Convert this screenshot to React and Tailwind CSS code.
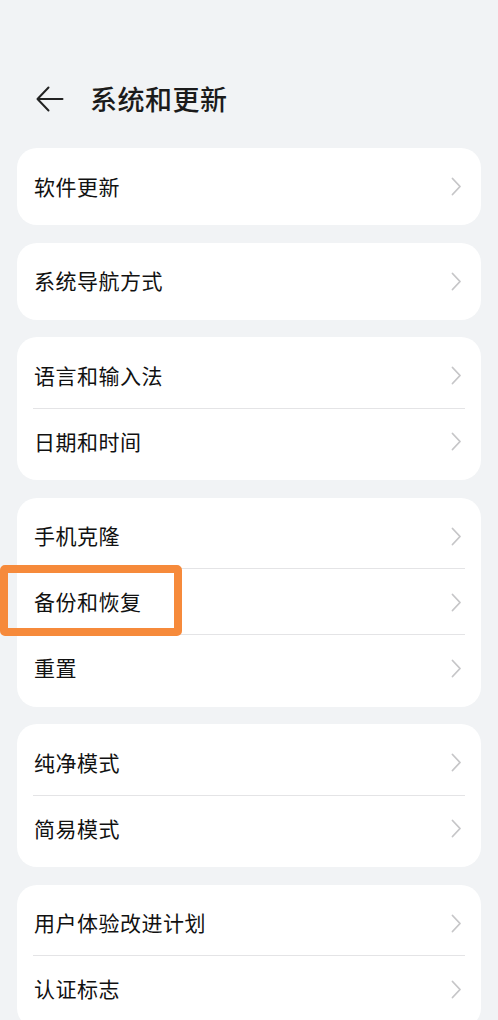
const groups = [
  ["软件更新"],
  ["系统导航方式"],
  ["语言和输入法", "日期和时间"],
  ["手机克隆", "备份和恢复", "重置"],
  ["纯净模式", "简易模式"],
  ["用户体验改进计划", "认证标志"],
];

const highlighted = "备份和恢复";

function Chevron() {
  return (
    <svg width="11" height="19" viewBox="0 0 11 19" fill="none" className="shrink-0">
      <path d="M1.5 1.5 L9 9.5 L1.5 17.5" stroke="#c6c6c8" strokeWidth="1.8" strokeLinecap="round" strokeLinejoin="round" />
    </svg>
  );
}

function Row({ label, last }) {
  return (
    <div className="relative h-[66px] flex items-center pl-[17px] pr-[19px]">
      <span className="flex-1 text-[21px] text-[#111111] tracking-[0.5px]">{label}</span>
      <Chevron />
      {!last && <div className="absolute left-[16px] right-[16px] bottom-0 h-px bg-[#e4e4e6]" />}
      {label === highlighted && (
        <div className="absolute left-[-17px] top-[-4px] w-[182px] h-[71px] border-[8px] border-[#f68a3b] rounded-[5px] pointer-events-none" />
      )}
    </div>
  );
}

export default function App() {
  return (
    <div
      className="min-h-[1020px] h-[1020px] overflow-hidden bg-[#f1f3f5] pt-[71px]"
      style={{ fontFamily: '"Noto Sans CJK SC", "Noto Sans", sans-serif' }}
    >
      <div className="h-[56px] flex items-center pl-[36px] mb-[21px]">
        <svg width="28" height="26" viewBox="0 0 28 26" fill="none">
          <path d="M26.5 13 H2 M12.5 1.5 L1.5 13 L12.5 24.5" stroke="#222" strokeWidth="2" strokeLinecap="round" strokeLinejoin="round" />
        </svg>
        <h1 className="ml-[26px] text-[27px] font-medium text-[#1b1b1b] tracking-[0.5px]">系统和更新</h1>
      </div>

      <div className="flex flex-col gap-[17.5px] px-[17px]">
        {groups.map((items, gi) => (
          <div key={gi} className="bg-white rounded-[20px] py-[5.5px]">
            {items.map((label, i) => (
              <Row key={label} label={label} last={i === items.length - 1} />
            ))}
          </div>
        ))}
      </div>
    </div>
  );
}
